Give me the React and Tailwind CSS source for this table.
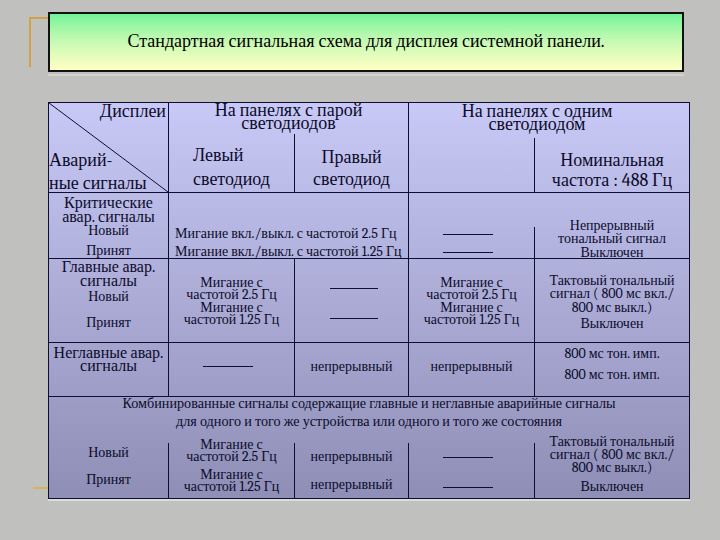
import React from 'react';

// Слайд: стандартная сигнальная схема для дисплея системной панели

const Dash = ({ className = '' }) => (
  <div className={`h-px bg-[#0e0e34] ${className}`} />
);

export default function App() {
  return (
    <div className="w-[720px] h-[540px] overflow-hidden bg-[#c0c0bf] font-serif [font-family:'Liberation_Serif','Times_New_Roman',serif] text-[#0c0c2a]">
      {/* title */}
      <div className="flex pt-[12px]">
        <div className="w-[48px] shrink-0 pt-[5px]">
          <div className="ml-[29px] h-[50px] border-l-2 border-t-2 border-[#d6a046]" />
        </div>
        <div className="w-[636px] h-[60px] border-2 border-[#111111] bg-gradient-to-b from-[#70f398] via-[#c8fab4] to-[#ffffc4] flex items-center justify-center text-[18px] leading-[24px] text-black">
          Стандартная сигнальная схема для дисплея системной панели.
        </div>
      </div>
      <div className="ml-[48px] mt-[2px] h-[2px] w-[636px] bg-[#d2d2cf]" />

      {/* table */}
      <div className="flex mt-[26px]">
        <div className="w-[48px] shrink-0 flex flex-col justify-end pb-[10px]">
          <div className="ml-[33px] h-[2px] bg-[#d6b25a]" />
        </div>
        <div className="w-[642px] border border-[#0e0e34] bg-gradient-to-b from-[#c9c9f7] to-[#8e8eb6]">
          {/* header */}
          <div className="flex h-[90px] border-b border-[#0e0e34]">
            <div className="relative w-[120px] border-r border-[#0e0e34]">
              <svg className="absolute inset-0" width="119" height="89" viewBox="0 0 119 89">
                <line x1="0" y1="0" x2="119" y2="89" stroke="#0e0e34" strokeWidth="1" />
              </svg>
              <div className="relative text-right pr-[2px] text-[18px] leading-[18px]">Дисплеи</div>
              <div className="relative mt-[28px] text-[18px] leading-[23px] whitespace-nowrap">
                <div>Аварий-</div>
                <div>ные сигналы</div>
              </div>
            </div>
            <div className="w-[240px] border-r border-[#0e0e34] flex flex-col">
              <div className="h-[35px] pt-[1px] text-center text-[18px] leading-[13px]">
                <div>На панелях с парой</div>
                <div>светодиодов</div>
              </div>
              <div className="flex flex-1">
                <div className="w-[125px] pl-[24px] pt-[10px] text-[18px] leading-[24px]">
                  <div>Левый</div>
                  <div>светодиод</div>
                </div>
                <div className="flex-1 border-l border-[#0e0e34] pt-[13px] text-center text-[18px] leading-[22px]">
                  <div>Правый</div>
                  <div>светодиод</div>
                </div>
              </div>
            </div>
            <div className="flex-1 flex flex-col">
              <div className="h-[35px] pt-[2px] pr-[24px] text-center text-[18px] leading-[13px]">
                <div>На панелях с одним</div>
                <div>светодиодом</div>
              </div>
              <div className="flex flex-1">
                <div className="w-[125px]" />
                <div className="flex-1 border-l border-[#0e0e34] pt-[13px] text-center text-[18px] leading-[20px] whitespace-nowrap">
                  <div>Номинальная</div>
                  <div>частота : 488 Гц</div>
                </div>
              </div>
            </div>
          </div>

          {/* critical */}
          <div className="flex h-[66px] border-b border-[#0e0e34]">
            <div className="w-[120px] border-r border-[#0e0e34] pt-[3px] text-center">
              <div className="text-[16px] leading-[14px]">Критические</div>
              <div className="text-[16px] leading-[14px]">авар. сигналы</div>
              <div className="text-[14px] leading-[14px]">Новый</div>
              <div className="mt-[6px] text-[14px] leading-[14px]">Принят</div>
            </div>
            <div className="w-[240px] border-r border-[#0e0e34] pl-[6px] pt-[32px] text-[14px] leading-[18px] whitespace-nowrap">
              <div>Мигание вкл./выкл. с частотой 2.5 Гц</div>
              <div>Мигание вкл./выкл. с частотой 1.25 Гц</div>
            </div>
            <div className="flex flex-1">
              <div className="w-[125px] pl-[34px] pt-[41px]">
                <Dash className="w-[50px]" />
                <Dash className="w-[50px] mt-[17px]" />
              </div>
              <div className="w-px self-end h-[31px] bg-[#0e0e34]" />
              <div className="flex-1 pt-[26px] text-center text-[14px] leading-[13.3px]">
                <div>Непрерывный</div>
                <div>тональный сигнал</div>
                <div>Выключен</div>
              </div>
            </div>
          </div>

          {/* main */}
          <div className="flex h-[84px] border-b border-[#0e0e34]">
            <div className="w-[120px] border-r border-[#0e0e34] pt-[1px] text-center">
              <div className="text-[16px] leading-[14px]">Главные авар.</div>
              <div className="text-[16px] leading-[14px]">сигналы</div>
              <div className="mt-[2px] text-[14px] leading-[14px]">Новый</div>
              <div className="mt-[12px] text-[14px] leading-[14px]">Принят</div>
            </div>
            <div className="w-[126px] border-r border-[#0e0e34] pt-[18px] text-center text-[14px] leading-[12.3px] whitespace-nowrap">
              <div>Мигание с</div>
              <div>частотой 2.5 Гц</div>
              <div>Мигание с</div>
              <div>частотой 1.25 Гц</div>
            </div>
            <div className="w-[114px] border-r border-[#0e0e34] pl-[35px] pt-[29px]">
              <Dash className="w-[48px]" />
              <Dash className="w-[48px] mt-[29px]" />
            </div>
            <div className="w-[126px] border-r border-[#0e0e34] pt-[18px] text-center text-[14px] leading-[12.3px] whitespace-nowrap">
              <div>Мигание с</div>
              <div>частотой 2.5 Гц</div>
              <div>Мигание с</div>
              <div>частотой 1.25 Гц</div>
            </div>
            <div className="flex-1 pt-[15px] text-center text-[14px] leading-[13.3px] whitespace-nowrap">
              <div>Тактовый тональный</div>
              <div>сигнал ( 800 мс вкл./</div>
              <div>800 мс выкл.)</div>
              <div className="mt-[3px]">Выключен</div>
            </div>
          </div>

          {/* non-main */}
          <div className="flex h-[54px] border-b border-[#0e0e34]">
            <div className="w-[120px] border-r border-[#0e0e34] pt-[4px] text-center text-[16px] leading-[13.3px] whitespace-nowrap">
              <div>Неглавные авар.</div>
              <div>сигналы</div>
            </div>
            <div className="w-[126px] border-r border-[#0e0e34] pl-[34px] pt-[23px]">
              <Dash className="w-[50px]" />
            </div>
            <div className="w-[114px] border-r border-[#0e0e34] pt-[17px] text-center text-[14px] leading-[14px]">
              непрерывный
            </div>
            <div className="w-[126px] border-r border-[#0e0e34] pt-[17px] text-center text-[14px] leading-[14px]">
              непрерывный
            </div>
            <div className="flex-1 pt-[1px] text-center text-[14px] leading-[20.7px]">
              <div>800 мс тон. имп.</div>
              <div>800 мс тон. имп.</div>
            </div>
          </div>

          {/* combined */}
          <div className="flex flex-col h-[101px]">
            <div className="h-[46px] text-center text-[14.2px] leading-[18px] whitespace-nowrap">
              <div className="-mt-[2px]">Комбинированные сигналы содержащие главные и неглавные аварийные сигналы</div>
              <div>для одного и того же устройства или одного и того же состояния</div>
            </div>
            <div className="flex flex-1">
              <div className="w-[119px] pt-[3px] text-center text-[14px] leading-[14px]">
                <div>Новый</div>
                <div className="mt-[13px]">Принят</div>
              </div>
              <div className="w-[126px] border-l border-[#0e0e34] text-center text-[14px] leading-[11.7px] whitespace-nowrap">
                <div className="-mt-[4px]">Мигание с</div>
                <div>частотой 2.5 Гц</div>
                <div className="mt-[7px]">Мигание с</div>
                <div>частотой 1.25 Гц</div>
              </div>
              <div className="w-[114px] border-l border-[#0e0e34] pt-[7px] text-center text-[14px] leading-[14px]">
                <div>непрерывный</div>
                <div className="mt-[14px]">непрерывный</div>
              </div>
              <div className="w-[126px] border-l border-[#0e0e34] pl-[34px] pt-[14px]">
                <Dash className="w-[50px]" />
                <Dash className="w-[50px] mt-[29px]" />
              </div>
              <div className="flex-1 border-l border-[#0e0e34] text-center text-[14px] leading-[13.2px] whitespace-nowrap">
                <div className="-mt-[8px]">Тактовый тональный</div>
                <div>сигнал ( 800 мс вкл./</div>
                <div>800 мс выкл.)</div>
                <div className="mt-[5px]">Выключен</div>
              </div>
            </div>
          </div>
        </div>
      </div>
      <div className="ml-[48px] h-[2px] w-[642px] bg-[#dcdcd8]" />
    </div>
  );
}
